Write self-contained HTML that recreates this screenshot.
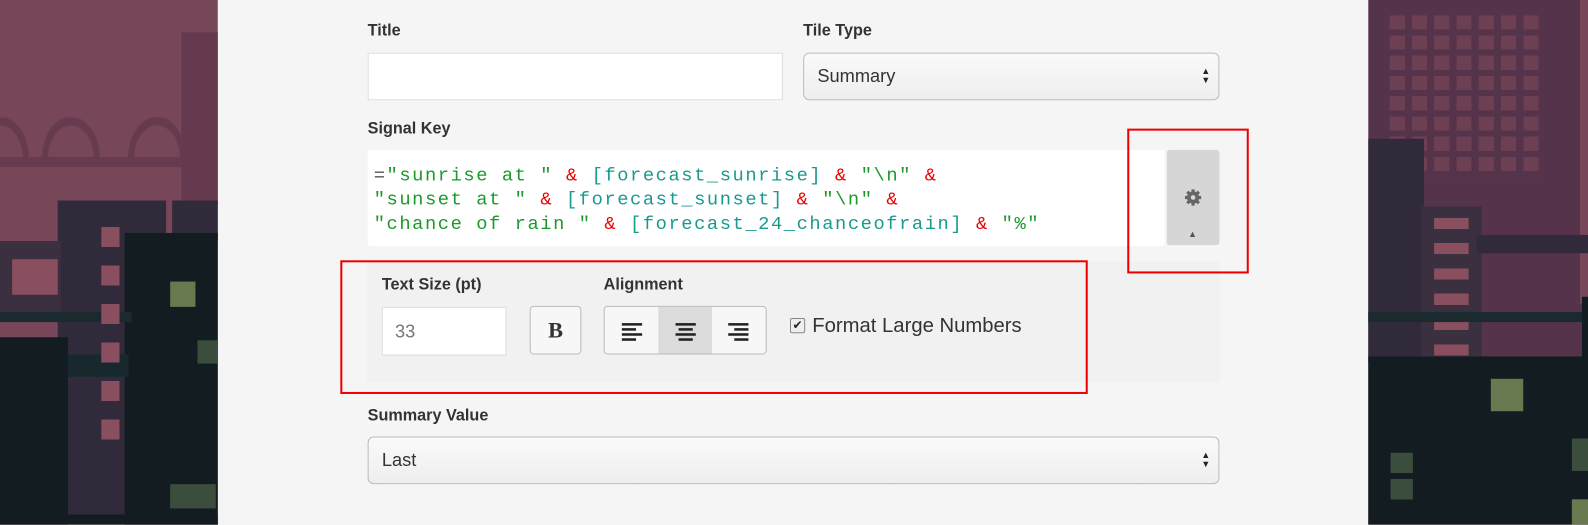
<!DOCTYPE html>
<html><head><style>
body{margin:0;width:1588px;height:518px;overflow:hidden;position:relative;background:#f5f5f5;font-family:"Liberation Sans",sans-serif;}
#w{position:absolute;left:0;top:0;width:1568px;height:512px;transform:scale(1.0128);transform-origin:0 0}
.a{position:absolute}
.lbl{position:absolute;font-weight:bold;font-size:16px;color:#333}
.inp{position:absolute;background:#fff;border:1px solid #ddd;box-sizing:border-box}
.sel{position:absolute;background:linear-gradient(#fafafa,#eee);border:1px solid #bbb;border-radius:6px;box-sizing:border-box;font-size:18px;color:#333;padding:12px 13px}
.arr{position:absolute;right:8px;top:13px;font-size:9px;line-height:9px;color:#222}
.code{font-family:"Liberation Mono",monospace;font-size:18.5px;letter-spacing:1.55px;line-height:24px;white-space:pre}
.g{color:#1a9a2a}.t{color:#199a8e}.r{color:#e00}
</style></head><body><div id="w">
<div class="a" style="left:0;top:0;width:215px;height:518px;background:#774659"></div>
<div class="a" style="left:179px;top:32px;width:36px;height:170px;background:#653a4e"></div>
<div class="a" style="left:0;top:155px;width:180px;height:10px;background:#663b4f"></div>
<div class="a" style="left:0;top:116px;width:180px;height:40px;background:radial-gradient(ellipse 28px 40px at 70px 40px,transparent 22px,#663b4f 23px,#663b4f 28px,transparent 29px),radial-gradient(ellipse 28px 40px at 155px 40px,transparent 22px,#663b4f 23px,#663b4f 28px,transparent 29px),radial-gradient(ellipse 28px 40px at 0px 40px,transparent 22px,#663b4f 23px,#663b4f 28px,transparent 29px)"></div>
<div class="a" style="left:57px;top:198px;width:107px;height:310px;background:#302a3a"></div>
<div class="a" style="left:170px;top:198px;width:45px;height:40px;background:#302a3a"></div>
<div class="a" style="left:0;top:238px;width:60px;height:70px;background:#3a3040"></div>
<div class="a" style="left:12px;top:256px;width:45px;height:35px;background:#8a4f5f"></div>
<div class="a" style="left:123px;top:230px;width:92px;height:288px;background:#131c21"></div>
<div class="a" style="left:0;top:333px;width:67px;height:185px;background:#131c21"></div>
<div class="a" style="left:0;top:308px;width:130px;height:10px;background:#1a2a2e"></div>
<div class="a" style="left:67px;top:350px;width:60px;height:22px;background:#17292d"></div>
<div class="a" style="left:168px;top:278px;width:25px;height:25px;background:#68784f"></div>
<div class="a" style="left:195px;top:336px;width:20px;height:23px;background:#3b4d3d"></div>
<div class="a" style="left:168px;top:478px;width:45px;height:24px;background:#3b4d3d"></div>
<div class="a" style="left:100px;top:224px;width:18px;height:220px;background:repeating-linear-gradient(#8a4f5f 0 20px,transparent 20px 38px)"></div>
<div class="a" style="left:0;top:508px;width:215px;height:10px;background:#131c21"></div>
<div class="a" style="left:1351px;top:0;width:237px;height:518px;background:#55334a"></div>
<div class="a" style="left:1560px;top:0;width:28px;height:300px;background:#774659"></div>
<div class="a" style="left:1372px;top:15px;width:150px;height:160px;background:repeating-linear-gradient(90deg,#8a4f5f 0 15px,transparent 15px 22px);opacity:.45;-webkit-mask:repeating-linear-gradient(#000 0 14px,transparent 14px 20px)"></div>
<div class="a" style="left:1351px;top:137px;width:55px;height:220px;background:#302a3a"></div>
<div class="a" style="left:1403px;top:204px;width:60px;height:150px;background:#3a3040"></div>
<div class="a" style="left:1416px;top:215px;width:34px;height:140px;background:repeating-linear-gradient(#8a4f5f 0 11px,transparent 11px 25px)"></div>
<div class="a" style="left:1458px;top:232px;width:130px;height:18px;background:#302a3a"></div>
<div class="a" style="left:1351px;top:308px;width:237px;height:10px;background:#1a2a2e"></div>
<div class="a" style="left:1351px;top:352px;width:237px;height:166px;background:#131c21"></div>
<div class="a" style="left:1562px;top:293px;width:26px;height:60px;background:#131c21"></div>
<div class="a" style="left:1472px;top:374px;width:32px;height:32px;background:#68784f"></div>
<div class="a" style="left:1552px;top:433px;width:34px;height:32px;background:#3b4d3d"></div>
<div class="a" style="left:1552px;top:493px;width:34px;height:25px;background:#68784f"></div>
<div class="a" style="left:1373px;top:447px;width:22px;height:48px;background:repeating-linear-gradient(#3b4d3d 0 20px,transparent 20px 26px)"></div>
<div class="lbl" style="left:363px;top:22px">Title</div>
<div class="inp" style="left:363px;top:52px;width:410px;height:47px"></div>
<div class="lbl" style="left:793px;top:22px">Tile Type</div>
<div class="sel" style="left:793px;top:52px;width:411px;height:47px">Summary<div class="arr">▲<br>▼</div></div>
<div class="lbl" style="left:363px;top:119px">Signal Key</div>
<div class="a" style="left:363px;top:148px;width:787px;height:95px;background:#fff;border-radius:3px"></div>
<div class="a code" style="left:369px;top:162px"><span style="color:#555">=</span><span class="g">"sunrise at "</span> <span class="r">&amp;</span> <span class="t">[forecast_sunrise]</span> <span class="r">&amp;</span> <span class="g">"\n"</span> <span class="r">&amp;</span>
<span class="g">"sunset at "</span> <span class="r">&amp;</span> <span class="t">[forecast_sunset]</span> <span class="r">&amp;</span> <span class="g">"\n"</span> <span class="r">&amp;</span>
<span class="g">"chance of rain "</span> <span class="r">&amp;</span> <span class="t">[forecast_24_chanceofrain]</span> <span class="r">&amp;</span> <span class="g">"%"</span></div>
<div class="a" style="left:1152px;top:148px;width:52px;height:94px;background:#d6d6d6;border-radius:3px"></div>
<svg class="a" style="left:1169px;top:186px" width="18" height="18" viewBox="0 0 18 18"><g fill="#666"><circle cx="9" cy="9" r="6"/><g stroke="#666" stroke-width="3.2"><line x1="9" y1="1" x2="9" y2="17"/><line x1="1" y1="9" x2="17" y2="9"/><line x1="3.3" y1="3.3" x2="14.7" y2="14.7"/><line x1="14.7" y1="3.3" x2="3.3" y2="14.7"/></g></g><circle cx="9" cy="9" r="2.3" fill="#d6d6d6"/></svg>
<div class="a" style="left:1173px;top:226px;font-size:9px;color:#555">▲</div>
<div class="a" style="left:362px;top:258px;width:843px;height:120px;background:#f1f1f1;border-radius:4px"></div>
<div class="a" style="left:1113px;top:127px;width:116px;height:139px;border:2px solid #e00"></div>
<div class="a" style="left:336px;top:257px;width:734px;height:128px;border:2px solid #e00"></div>
<div class="lbl" style="left:377px;top:273px">Text Size (pt)</div>
<div class="inp" style="left:377px;top:303px;width:123px;height:48px;font-size:18px;color:#777;padding:13px 12px">33</div>
<div class="a" style="left:523px;top:302px;width:51px;height:48px;box-sizing:border-box;border:1px solid #bbb;border-radius:4px;background:#f7f7f7;font-family:'Liberation Serif',serif;font-weight:bold;font-size:22px;text-align:center;line-height:46px;color:#333">B</div>
<div class="lbl" style="left:596px;top:273px">Alignment</div>
<div class="a" style="left:596px;top:302px;width:161px;height:48px;box-sizing:border-box;border:1px solid #bbb;border-radius:4px;background:#f7f7f7;overflow:hidden">
<div class="a" style="left:53px;top:0;width:53px;height:46px;background:#dcdcdc"></div>
<svg class="a" style="left:0;top:0" width="159" height="46"><g fill="#222">
<rect x="17" y="16" width="20" height="2.5"/><rect x="17" y="21" width="14" height="2.5"/><rect x="17" y="26" width="20" height="2.5"/><rect x="17" y="31" width="14" height="2.5"/>
<rect x="70" y="16" width="20" height="2.5"/><rect x="73" y="21" width="14" height="2.5"/><rect x="70" y="26" width="20" height="2.5"/><rect x="73" y="31" width="14" height="2.5"/>
<rect x="122" y="16" width="20" height="2.5"/><rect x="128" y="21" width="14" height="2.5"/><rect x="122" y="26" width="20" height="2.5"/><rect x="128" y="31" width="14" height="2.5"/></g></svg></div>
<div class="a" style="left:780px;top:314px;width:13px;height:13px;border:1px solid #888;border-radius:2px;background:#eee;font-size:12px;line-height:13px;text-align:center;color:#222">✔</div>
<div class="a" style="left:802px;top:311px;font-size:20px;color:#333">Format Large Numbers</div>
<div class="lbl" style="left:363px;top:402px">Summary Value</div>
<div class="sel" style="left:363px;top:431px;width:841px;height:47px">Last<div class="arr">▲<br>▼</div></div>
</div></body></html>
